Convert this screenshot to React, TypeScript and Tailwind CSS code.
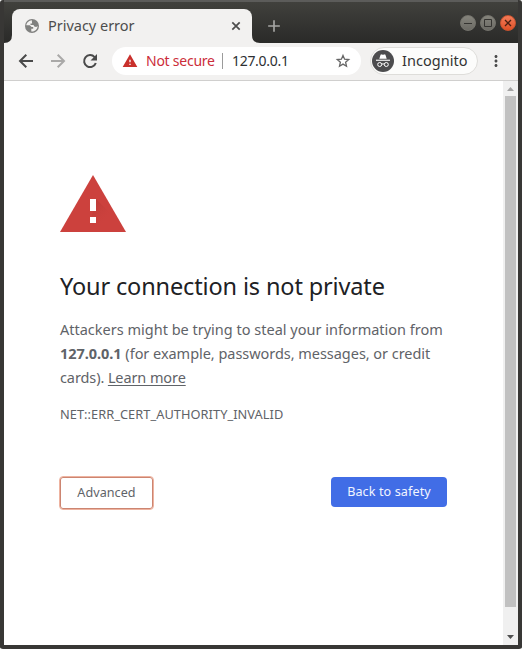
import React from 'react';
import { MdAdd, MdMoreVert, MdWarning } from 'react-icons/md';

function Globe() {
  return (
    <svg viewBox="0 0 14 14" className="size-3.5 shrink-0">
      <circle cx="7" cy="7" r="7" fill="#80817f" />
      <path d="M6.800 1.300C4 1.500 1.600 3.800 1.300 6.300H4.800L6.600 7.900H8.200V9.800H6.300V12.500C9.800 12.900 12.600 10.300 12.600 7L11.200 8.100 9.300 7.600 8.500 5.900H5.500V4.400H7.100z" fill="#f2f1f0" />
    </svg>
  );
}

function LineIcon({ d, className }: { d: string; className: string }) {
  return (
    <svg viewBox="0 0 20 20" className={'size-5 shrink-0 ' + className} fill="none" stroke="currentColor" strokeWidth="2">
      <path d={d} />
    </svg>
  );
}

function Reload() {
  return (
    <svg viewBox="0 0 20 20" className="ml-3 size-5 shrink-0 text-[#4a4a4a]">
      <path d="M14.600 6.100A6 6 0 1 0 15.800 12" fill="none" stroke="currentColor" strokeWidth="2" />
      <path d="M17 3v6.500h-6.500z" fill="currentColor" />
    </svg>
  );
}

function Star() {
  return (
    <svg viewBox="0 0 16 16" className="size-4 shrink-0" fill="none" stroke="#666" strokeWidth="1.3">
      <path d="M8 2.400 9.600 6.200 13.700 6.500 10.600 9.200 11.500 13.200 8 11.100 4.500 13.200 5.400 9.200 2.300 6.500 6.400 6.200z" />
    </svg>
  );
}

function Incognito() {
  return (
    <svg viewBox="0 0 22 22" className="size-[22px] shrink-0">
      <circle cx="11" cy="11" r="11" fill="#4c4c4e" />
      <path d="M7.300 8.800 8.500 5q.3-.8 1-.6l1.500.4 1.500-.4q.7-.2 1 .6l1.200 3.800z" fill="#fff" />
      <path d="M4 9.700h14v1.100H4z" fill="#fff" />
      <g fill="none" stroke="#fff" strokeWidth="1">
        <circle cx="7.700" cy="14.500" r="2" />
        <circle cx="14.300" cy="14.500" r="2" />
        <path d="M9.700 14.200q1.300-.7 2.600 0" />
      </g>
    </svg>
  );
}

function WindowButton({ kind }: { kind: 'min' | 'max' | 'close' }) {
  const close = kind === 'close';
  return (
    <span
      className={
        'flex size-4 items-center justify-center rounded-full border ' +
        (close ? 'border-[#c9532f] bg-linear-to-b from-[#f37b58] to-[#df5025]' : 'border-[#74736c] bg-linear-to-b from-[#85847c] to-[#6b6a64]')
      }
    >
      <svg viewBox="0 0 14 14" className="size-3.5 shrink-0" fill="none" stroke={close ? '#4a2013' : '#353431'}>
        {kind === 'min' && <path d="M3 7.500h8" />}
        {kind === 'max' && <path d="M3.500 3.500h7v7h-7z" />}
        {close && <path d="M4 4l6 6M10 4l-6 6" strokeWidth="1.3" />}
      </svg>
    </span>
  );
}

function TitleBar() {
  return (
    <header className="-mx-1 flex h-[43px] items-end border-t-2 border-[#5c5c5a] bg-linear-to-b from-[#41413d] to-[#2a2a28] pl-1 pr-1.5">
      <svg viewBox="0 0 8 8" className="size-2 shrink-0" fill="#f2f1f0"><path d="M0 8Q8 8 8 0V8z" /></svg>
      <div className="flex h-[34px] w-60 shrink-0 items-center rounded-t-lg bg-[#f2f1f0] pl-[13px] pr-[9px]">
        <Globe />
        <span className="ml-[9px] flex-1 whitespace-nowrap text-[14.5px] tracking-[-0.02px] text-[#4d4d4d]">Privacy error</span>
        <svg viewBox="0 0 14 14" className="size-3.5" fill="none" stroke="#4c4c4c" strokeWidth="1.7">
          <path d="M3.300 3.300l7.400 7.400M10.700 3.300l-7.400 7.400" />
        </svg>
      </div>
      <svg viewBox="0 0 8 8" className="size-2 shrink-0" fill="#f2f1f0"><path d="M8 8Q0 8 0 0V8z" /></svg>
      <MdAdd className="mb-[7px] ml-1 size-5 text-[#a5a5a3]" />
      <div className="mb-3 ml-auto flex gap-1">
        <WindowButton kind="min" />
        <WindowButton kind="max" />
        <WindowButton kind="close" />
      </div>
    </header>
  );
}

function Toolbar() {
  return (
    <nav className="flex h-[38px] items-center border-b border-[#d0cfce] bg-[#f2f1f0] pb-px pl-3">
      <LineIcon className="text-[#4a4a4a]" d="M17 10H4.500M10.300 3.700 4 10l6.300 6.300" />
      <LineIcon className="ml-3 text-[#aaa9a8]" d="M3 10h12.500M9.700 3.700 16 10l-6.300 6.300" />
      <Reload />
      <div className="ml-3 flex h-7 w-[249px] shrink-0 items-center rounded-full bg-white pl-2.5 pr-2.5">
        <MdWarning className="size-4 text-[#c9302c]" />
        <span className="ml-2 w-[76px] whitespace-nowrap text-sm tracking-[-0.25px] text-[#cc2d3a]">Not secure</span>
        <span className="h-4 w-px bg-[#9b9b9b]" />
        <span className="ml-[9px] flex-1 whitespace-nowrap text-sm tracking-[-0.3px] text-[#2d3033]">127.0.0.1</span>
        <Star />
      </div>
      <div className="ml-[9px] flex h-7 w-[108px] shrink-0 items-center rounded-full border border-[#deddda] bg-[#fcfcfb] pl-px">
        <Incognito />
        <span className="ml-2 whitespace-nowrap text-[14.5px] tracking-[0.05px] text-[#333]">Incognito</span>
      </div>
      <MdMoreVert className="ml-[9px] size-[18px] text-[#4a4a4a]" />
    </nav>
  );
}

function WarningTriangle() {
  return (
    <svg viewBox="0 0 66 57" className="h-[57px] w-[66px]">
      <defs>
        <linearGradient id="shade" x1="30" y1="24" x2="54" y2="48" gradientUnits="userSpaceOnUse">
          <stop offset="0" stopColor="#a9332f" stopOpacity=".65" />
          <stop offset=".8" stopColor="#cc413d" stopOpacity="0" />
        </linearGradient>
      </defs>
      <path d="M33 0 66 57H0z" fill="#cc413d" />
      <path d="M36 24 58 46V57H39L30 48z" fill="url(#shade)" />
      <path d="M30 24h6v12h-6zM30 42h6v6h-6z" fill="#fff" />
    </svg>
  );
}

function Scrollbar() {
  return (
    <div className="flex w-[15px] shrink-0 flex-col items-center bg-[#f0f0f0]">
      <svg viewBox="0 0 15 15" className="size-[15px]"><path d="M4 10 7.500 6 11 10z" fill="#a3a3a3" /></svg>
      <div className="h-[511px] w-[11px] bg-[#c1c1c1]" />
      <svg viewBox="0 0 15 15" className="mt-auto size-[15px]"><path d="M4 5h7L7.500 9z" fill="#505050" /></svg>
    </div>
  );
}

export default function App() {
  return (
    <div className="h-[649px] w-[522px] overflow-hidden rounded-[3px] border-x-4 border-b-4 border-[#383735] bg-white font-['Noto_Sans',sans-serif]">
      <TitleBar />
      <Toolbar />
      <div className="flex h-[564px]">
        <main className="min-w-0 flex-1 pl-14 pt-[94px]">
          <WarningTriangle />
          <h1 className="mt-[39px] whitespace-nowrap text-[23.5px] leading-[30px] tracking-[-0.14px] text-[#202124]">Your connection is not private</h1>
          <div className="mt-4 whitespace-nowrap text-[14.5px] leading-6 text-[#5f6368]">
            <p>Attackers might be trying to steal your information from</p>
            <p className="tracking-[-0.04px]"><b>127.0.0.1</b> (for example, passwords, messages, or credit</p>
            <p className="tracking-[-0.1px]">cards). <a className="underline underline-offset-2">Learn more</a></p>
          </div>
          <p className="mt-[15px] whitespace-nowrap text-[12.8px] leading-5 tracking-[0.05px] text-[#5f6368]">NET::ERR_CERT_AUTHORITY_INVALID</p>
          <div className="-ml-px mt-[52px] flex w-[388px] items-start justify-between">
            <button className="flex h-[34px] w-[95px] items-center justify-center rounded border border-[#eeb3a0] text-[12.6px] tracking-[0.05px] text-[#5f6368] inset-ring inset-ring-[#cc8571]">Advanced</button>
            <button className="mt-px flex h-[30px] w-[116px] items-center justify-center rounded bg-[#416de6] text-[12.6px] tracking-[0.1px] text-[#f1f5ff]">Back to safety</button>
          </div>
        </main>
        <Scrollbar />
      </div>
    </div>
  );
}
